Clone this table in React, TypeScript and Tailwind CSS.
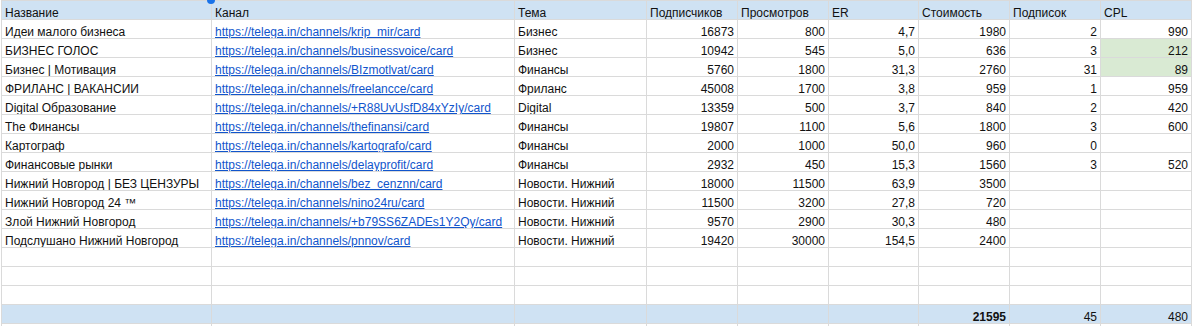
import React from "react";

type Row = {
  name: string;
  url: string;
  theme: string;
  subs: string;
  views: string;
  er: string;
  cost: string;
  sub2: string;
  cpl: string;
  green?: boolean;
};

const rows: Row[] = [
  { name: "Идеи малого бизнеса", url: "https://telega.in/channels/krip_mir/card", theme: "Бизнес", subs: "16873", views: "800", er: "4,7", cost: "1980", sub2: "2", cpl: "990" },
  { name: "БИЗНЕС ГОЛОС", url: "https://telega.in/channels/businessvoice/card", theme: "Бизнес", subs: "10942", views: "545", er: "5,0", cost: "636", sub2: "3", cpl: "212", green: true },
  { name: "Бизнес | Мотивация", url: "https://telega.in/channels/BIzmotlvat/card", theme: "Финансы", subs: "5760", views: "1800", er: "31,3", cost: "2760", sub2: "31", cpl: "89", green: true },
  { name: "ФРИЛАНС | ВАКАНСИИ", url: "https://telega.in/channels/freelancce/card", theme: "Фриланс", subs: "45008", views: "1700", er: "3,8", cost: "959", sub2: "1", cpl: "959" },
  { name: "Digital Образование", url: "https://telega.in/channels/+R88UvUsfD84xYzIy/card", theme: "Digital", subs: "13359", views: "500", er: "3,7", cost: "840", sub2: "2", cpl: "420" },
  { name: "The Финансы", url: "https://telega.in/channels/thefinansi/card", theme: "Финансы", subs: "19807", views: "1100", er: "5,6", cost: "1800", sub2: "3", cpl: "600" },
  { name: "Картограф", url: "https://telega.in/channels/kartografo/card", theme: "Финансы", subs: "2000", views: "1000", er: "50,0", cost: "960", sub2: "0", cpl: "" },
  { name: "Финансовые рынки", url: "https://telega.in/channels/delayprofit/card", theme: "Финансы", subs: "2932", views: "450", er: "15,3", cost: "1560", sub2: "3", cpl: "520" },
  { name: "Нижний Новгород | БЕЗ ЦЕНЗУРЫ", url: "https://telega.in/channels/bez_cenznn/card", theme: "Новости. Нижний", subs: "18000", views: "11500", er: "63,9", cost: "3500", sub2: "", cpl: "" },
  { name: "Нижний Новгород 24 ™", url: "https://telega.in/channels/nino24ru/card", theme: "Новости. Нижний", subs: "11500", views: "3200", er: "27,8", cost: "720", sub2: "", cpl: "" },
  { name: "Злой Нижний Новгород", url: "https://telega.in/channels/+b79SS6ZADEs1Y2Qy/card", theme: "Новости. Нижний", subs: "9570", views: "2900", er: "30,3", cost: "480", sub2: "", cpl: "" },
  { name: "Подслушано Нижний Новгород", url: "https://telega.in/channels/pnnov/card", theme: "Новости. Нижний", subs: "19420", views: "30000", er: "154,5", cost: "2400", sub2: "", cpl: "" },
];

const headers = ["Название", "Канал", "Тема", "Подписчиков", "Просмотров", "ER", "Стоимость", "Подписок", "CPL"];

const gridCols = "grid grid-cols-[210px_303px_132px_91px_91px_90px_91px_91px_91px]";

function Cell({
  children,
  right,
  bg,
  bold,
}: {
  children?: React.ReactNode;
  right?: boolean;
  bg?: string;
  bold?: boolean;
}) {
  return (
    <div
      className={`h-[19px] border-r border-b border-[#dadada] flex items-end overflow-hidden whitespace-nowrap ${
        right ? "justify-end pr-[3px]" : "justify-start pl-[3px]"
      } ${bg ?? "bg-white"} ${bold ? "font-bold" : ""}`}
    >
      {children}
    </div>
  );
}

export default function App() {
  return (
    <div
      className="relative w-[1195px] h-[326px] overflow-hidden bg-white text-[12px] leading-[12px] text-[#111]"
      style={{ fontFamily: '"Liberation Sans", Arial, sans-serif' }}
    >
      <div className="ml-[1px] border-l border-[#dadada] w-[1191px]">
        <div className={`${gridCols} border-t border-[#dadada]`}>
          {headers.map((h, i) => (
            <Cell key={i} bg="bg-[#cfe2f3]">
              {h}
            </Cell>
          ))}
        </div>
        {rows.map((r, i) => (
          <div key={i} className={gridCols}>
            <Cell>{r.name}</Cell>
            <Cell>
              <span className="text-[#1155cc] underline">{r.url}</span>
            </Cell>
            <Cell>{r.theme}</Cell>
            <Cell right>{r.subs}</Cell>
            <Cell right>{r.views}</Cell>
            <Cell right>{r.er}</Cell>
            <Cell right>{r.cost}</Cell>
            <Cell right>{r.sub2}</Cell>
            <Cell right bg={r.green ? "bg-[#d9ead3]" : undefined}>
              {r.cpl}
            </Cell>
          </div>
        ))}
        {[0, 1, 2].map((k) => (
          <div key={"e" + k} className={gridCols}>
            {headers.map((_, i) => (
              <Cell key={i} />
            ))}
          </div>
        ))}
        <div className={gridCols}>
          <Cell bg="bg-[#cfe2f3]" />
          <Cell bg="bg-[#cfe2f3]" />
          <Cell bg="bg-[#cfe2f3]" />
          <Cell bg="bg-[#cfe2f3]" />
          <Cell bg="bg-[#cfe2f3]" />
          <Cell bg="bg-[#cfe2f3]" />
          <Cell bg="bg-[#cfe2f3]" right bold>
            21595
          </Cell>
          <Cell bg="bg-[#cfe2f3]" right>
            45
          </Cell>
          <Cell bg="bg-[#cfe2f3]" right>
            480
          </Cell>
        </div>
        <div className={gridCols}>
          {headers.map((_, i) => (
            <Cell key={i} />
          ))}
        </div>
      </div>
      <div className="absolute left-[207px] top-[-4px] w-[8px] h-[8px] rounded-full bg-[#1a73e8]" />
    </div>
  );
}
